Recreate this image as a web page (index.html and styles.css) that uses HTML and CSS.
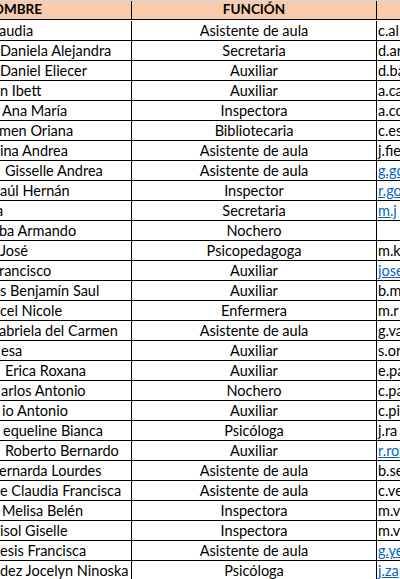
FILE: index.html
```html
<!DOCTYPE html>
<html lang="es">
<head>
<meta charset="utf-8">
<title>Funcionarios</title>
<link rel="stylesheet" href="styles.css">
</head>
<body>
<div class="sheet">
  <div class="cell h c1"><span class="cut6">OMBRE</span></div>
  <div class="cell h c2">FUNCIÓN</div>
  <div class="cell h c3"></div>

  <div class="cell c1"><span class="cut1">audia</span></div><div class="cell c2">Asistente de aula</div><div class="cell c3">c.al</div>
  <div class="cell c1">Daniela Alejandra</div><div class="cell c2">Secretaria</div><div class="cell c3">d.ar</div>
  <div class="cell c1">Daniel Eliecer</div><div class="cell c2">Auxiliar</div><div class="cell c3">d.ba</div>
  <div class="cell c1">n Ibett</div><div class="cell c2">Auxiliar</div><div class="cell c3">a.ca</div>
  <div class="cell c1 i3">Ana María</div><div class="cell c2">Inspectora</div><div class="cell c3">a.co</div>
  <div class="cell c1"><span class="cut1">men Oriana</span></div><div class="cell c2">Bibliotecaria</div><div class="cell c3">c.es</div>
  <div class="cell c1">ina Andrea</div><div class="cell c2">Asistente de aula</div><div class="cell c3">j.fie</div>
  <div class="cell c1 i7">Gisselle Andrea</div><div class="cell c2">Asistente de aula</div><div class="cell c3"><a href="#">g.go</a></div>
  <div class="cell c1">aúl Hernán</div><div class="cell c2">Inspector</div><div class="cell c3"><a href="#">r.go</a></div>
  <div class="cell c1"><span class="cut4">a</span></div><div class="cell c2">Secretaria</div><div class="cell c3"><a href="#">m.j</a></div>
  <div class="cell c1"><span class="cut1">ba Armando</span></div><div class="cell c2">Nochero</div><div class="cell c3"></div>
  <div class="cell c1">José</div><div class="cell c2">Psicopedagoga</div><div class="cell c3">m.k</div>
  <div class="cell c1"><span class="cut1">rancisco</span></div><div class="cell c2">Auxiliar</div><div class="cell c3"><a href="#">jose</a></div>
  <div class="cell c1">s Benjamín Saul</div><div class="cell c2">Auxiliar</div><div class="cell c3">b.m</div>
  <div class="cell c1">cel Nicole</div><div class="cell c2">Enfermera</div><div class="cell c3">m.r</div>
  <div class="cell c1"><span class="cut1">abriela del Carmen</span></div><div class="cell c2">Asistente de aula</div><div class="cell c3">g.va</div>
  <div class="cell c1 i2">esa</div><div class="cell c2">Auxiliar</div><div class="cell c3">s.or</div>
  <div class="cell c1 i7">Erica Roxana</div><div class="cell c2">Auxiliar</div><div class="cell c3">e.pa</div>
  <div class="cell c1 i2">arlos Antonio</div><div class="cell c2">Nochero</div><div class="cell c3">c.pa</div>
  <div class="cell c1 i3">io Antonio</div><div class="cell c2">Auxiliar</div><div class="cell c3">c.pi</div>
  <div class="cell c1 i5">equeline Bianca</div><div class="cell c2">Psicóloga</div><div class="cell c3">j.ra</div>
  <div class="cell c1 i7">Roberto Bernardo</div><div class="cell c2">Auxiliar</div><div class="cell c3"><a href="#">r.ro</a></div>
  <div class="cell c1"><span class="cut1">ernarda Lourdes</span></div><div class="cell c2">Asistente de aula</div><div class="cell c3">b.se</div>
  <div class="cell c1">e Claudia Francisca</div><div class="cell c2">Asistente de aula</div><div class="cell c3">c.ve</div>
  <div class="cell c1 i3">Melisa Belén</div><div class="cell c2">Inspectora</div><div class="cell c3">m.v</div>
  <div class="cell c1">isol Giselle</div><div class="cell c2">Inspectora</div><div class="cell c3">m.v</div>
  <div class="cell c1">esis Francisca</div><div class="cell c2">Asistente de aula</div><div class="cell c3"><a href="#">g.ye</a></div>
  <div class="cell c1">dez Jocelyn Ninoska</div><div class="cell c2">Psicóloga</div><div class="cell c3"><a href="#">j.za</a></div>
</div>
</body>
</html>
```
FILE: styles.css
```css
html, body {
  margin: 0;
  padding: 0;
  background: #ffffff;
  overflow: hidden;
}

body {
  font-family: Lato, "Liberation Sans", sans-serif;
  font-size: 14.5px;
  color: #000000;
}

.sheet {
  display: grid;
  grid-template-columns: 132px 245px 1fr;
  grid-auto-rows: 20px;
  border-top: 1px solid #d3dae4;
  width: 420px;
}

.cell {
  box-sizing: border-box;
  border-bottom: 1px solid #000000;
  white-space: nowrap;
  overflow: hidden;
  display: flex;
  align-items: flex-end;
  padding-bottom: 1px;
  line-height: 17px;
}

.sheet > .h {
  background: #f8cbad;
  font-weight: bold;
  font-size: 13.5px;
  height: 19px;
  align-self: start;
}

.c1, .c2 {
  border-right: 1px solid #000000;
}

.c2 {
  justify-content: center;
}

.c3 {
  padding-left: 1px;
}

.i2 { padding-left: 1px; }
.i3 { padding-left: 2px; }
.i5 { padding-left: 3px; }
.i7 { padding-left: 5px; }

.cut1 { margin-left: -1px; }
.cut4 { margin-left: -4px; }
.cut6 { margin-left: -7px; }

a {
  color: #0563c1;
  text-decoration: underline;
}
```
